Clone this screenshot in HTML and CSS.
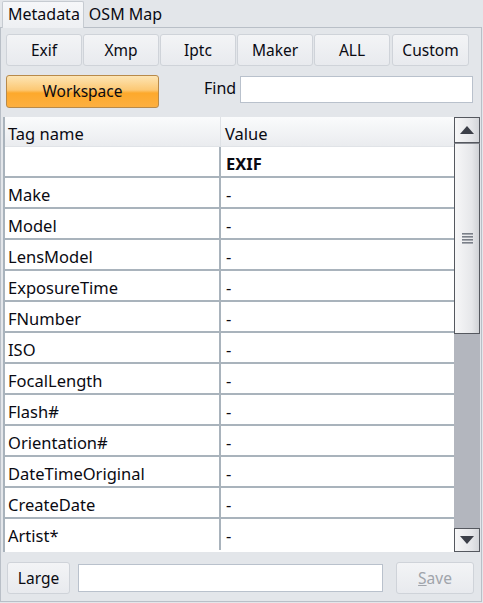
FILE: index.html
```html
<!DOCTYPE html>
<html>
<head>
<meta charset="utf-8">
<link rel="stylesheet" href="styles.css">
</head>
<body>
<div class="app">
  <div class="tabs">
    <div class="tab active">Metadata</div>
    <div class="tab">OSM Map</div>
  </div>
  <div class="panel">
    <div class="btnrow">
      <div class="btn">Exif</div>
      <div class="btn">Xmp</div>
      <div class="btn">Iptc</div>
      <div class="btn">Maker</div>
      <div class="btn">ALL</div>
      <div class="btn">Custom</div>
    </div>
    <div class="findrow">
      <div class="workspace">Workspace</div>
      <div class="findlabel">Find</div>
      <div class="input findinput"></div>
    </div>
    <div class="gridwrap">
      <div class="grid">
        <div class="row head"><div class="c1">Tag name</div><div class="c2">Value</div></div>
        <div class="row"><div class="c1"></div><div class="c2 bold">EXIF</div></div>
        <div class="row"><div class="c1">Make</div><div class="c2">-</div></div>
        <div class="row"><div class="c1">Model</div><div class="c2">-</div></div>
        <div class="row"><div class="c1">LensModel</div><div class="c2">-</div></div>
        <div class="row"><div class="c1">ExposureTime</div><div class="c2">-</div></div>
        <div class="row"><div class="c1">FNumber</div><div class="c2">-</div></div>
        <div class="row"><div class="c1">ISO</div><div class="c2">-</div></div>
        <div class="row"><div class="c1">FocalLength</div><div class="c2">-</div></div>
        <div class="row"><div class="c1">Flash#</div><div class="c2">-</div></div>
        <div class="row"><div class="c1">Orientation#</div><div class="c2">-</div></div>
        <div class="row"><div class="c1">DateTimeOriginal</div><div class="c2">-</div></div>
        <div class="row"><div class="c1">CreateDate</div><div class="c2">-</div></div>
        <div class="row last"><div class="c1">Artist*</div><div class="c2">-</div></div>
      </div>
      <div class="scroll">
        <div class="sbtn up"><svg width="14" height="8" viewBox="0 0 14 8"><polygon points="0,8 14,8 7,0" fill="#3c3f48"/></svg></div>
        <div class="thumb"><svg width="11" height="11" viewBox="0 0 11 11"><rect x="0" y="0" width="11" height="1.6" fill="#7a7f88"/><rect x="0" y="3" width="11" height="1.6" fill="#7a7f88"/><rect x="0" y="6" width="11" height="1.6" fill="#7a7f88"/><rect x="0" y="9" width="11" height="1.6" fill="#7a7f88"/></svg></div>
        <div class="track"></div>
        <div class="sbtn down"><svg width="14" height="8" viewBox="0 0 14 8"><polygon points="0,0 14,0 7,8" fill="#3c3f48"/></svg></div>
      </div>
    </div>
    <div class="bottomrow">
      <div class="btn large">Large</div>
      <div class="input bottominput"></div>
      <div class="btn save"><span class="u">S</span>ave</div>
    </div>
  </div>
</div>
</body>
</html>
```
FILE: styles.css
```css
html, body {
  margin: 0;
  padding: 0;
  background: #e3e6ea;
}
body {
  font-family: "Noto Sans", "Open Sans", sans-serif;
  font-size: 16px;
  color: #0a0a12;
}
.app {
  width: 483px;
  height: 603px;
  display: flex;
  flex-direction: column;
}
.tabs {
  display: flex;
  height: 27px;
  padding-left: 2px;
  padding-top: 1px;
  box-sizing: border-box;
  align-items: flex-end;
}
.tab {
  height: 26px;
  line-height: 26px;
  padding: 0 5px 0 5px;
  box-sizing: border-box;
}
.tab.active {
  background: linear-gradient(#f6f7f9, #eef0f3);
  border: 1px solid #c6cbd1;
  border-bottom: none;
  border-radius: 2px 2px 0 0;
  padding: 0 3px 0 5px;
  height: 27px;
  line-height: 25px;
  margin-bottom: -1px;
  position: relative;
  z-index: 1;
}
.panel {
  width: 482px;
  height: 575px;
  box-sizing: border-box;
  border: 1px solid #b9bfc7;
  display: flex;
  flex-direction: column;
}
.btnrow {
  display: flex;
  gap: 1px;
  margin: 6px 0 0 5px;
  height: 32px;
}
.btn {
  box-sizing: border-box;
  border: 1px solid #cfd3d9;
  border-radius: 3px;
  background: linear-gradient(#f3f4f6, #e8eaee);
  text-align: center;
  line-height: 30px;
  font-size: 15.5px;
}
.btnrow .btn {
  width: 76px;
}
.btnrow .btn:last-child {
  width: 77px;
  margin-left: 1px;
}
.findrow {
  display: flex;
  align-items: flex-start;
  margin: 9px 0 0 5px;
  height: 33px;
}
.workspace {
  width: 153px;
  height: 33px;
  box-sizing: border-box;
  border: 1px solid #b88a4a;
  border-radius: 3px;
  background: linear-gradient(#fde5b4 0%, #fcc874 45%, #fda92c 55%, #fdb040 100%);
  text-align: center;
  line-height: 31px;
  font-size: 15.5px;
}
.findlabel {
  margin-left: 45px;
  width: 36px;
  line-height: 26px;
  font-size: 16px;
}
.input {
  box-sizing: border-box;
  background: #fff;
  border: 1px solid #b9c1cc;
}
.findinput {
  width: 233px;
  height: 27px;
  margin-top: 1px;
}
.gridwrap {
  display: flex;
  margin: 9px 0 0 2px;
  height: 435px;
}
.grid {
  width: 451px;
  box-sizing: border-box;
  border-left: 2px solid #a9b3bc;
  background: #fff;
  overflow: hidden;
  font-size: 16.5px;
}
.row {
  display: flex;
  height: 31px;
  box-sizing: border-box;
  border-bottom: 2px solid #a9b3bc;
}
.row.last {
  border-bottom: none;
}
.row.head {
  height: 30px;
  border-bottom: 1px solid #e0e3e7;
  background: linear-gradient(#fafbfc, #eaecef);
}
.c1 {
  width: 216px;
  flex: none;
  box-sizing: border-box;
  padding-left: 3px;
  padding-top: 4px;
  border-right: 2px solid #a9b3bc;
  line-height: 25px;
  white-space: nowrap;
}
.c2 {
  flex: 1;
  padding-left: 5px;
  padding-top: 4px;
  line-height: 25px;
}
.head .c1 {
  border-right: 1px solid #dfe2e6;
  width: 216px;
  padding-top: 2px;
  line-height: 29px;
}
.head .c2 {
  padding-left: 4px;
  padding-top: 2px;
  line-height: 29px;
}
.bold {
  font-weight: bold;
}
.scroll {
  width: 26px;
  display: flex;
  flex-direction: column;
  background: #b3b6be;
  box-sizing: border-box;
}
.sbtn {
  height: 26px;
  box-sizing: border-box;
  border: 1px solid #55585f;
  background: linear-gradient(90deg, #f7f7f8, #e4e5e8 70%, #d3d5d9);
  display: flex;
  align-items: center;
  justify-content: center;
}
.sbtn.down {
  height: 24px;
}
.thumb {
  height: 191px;
  box-sizing: border-box;
  border: 1px solid #55585f;
  border-top: 1px solid #8a8d94;
  background: linear-gradient(90deg, #f7f7f8, #e6e7ea 70%, #d0d2d6);
  display: flex;
  align-items: center;
  justify-content: center;
  padding-left: 1px;
}
.track {
  flex: 1;
  background: #b3b6be;
}
.bottomrow {
  display: flex;
  align-items: center;
  margin: 10px 0 0 6px;
  height: 32px;
}
.large {
  width: 63px;
  height: 32px;
}
.bottominput {
  width: 305px;
  height: 28px;
  margin-left: 8px;
}
.save {
  width: 78px;
  height: 32px;
  margin-left: 13px;
  color: #a0a4ab;
}
.u {
  text-decoration: underline;
}
```
